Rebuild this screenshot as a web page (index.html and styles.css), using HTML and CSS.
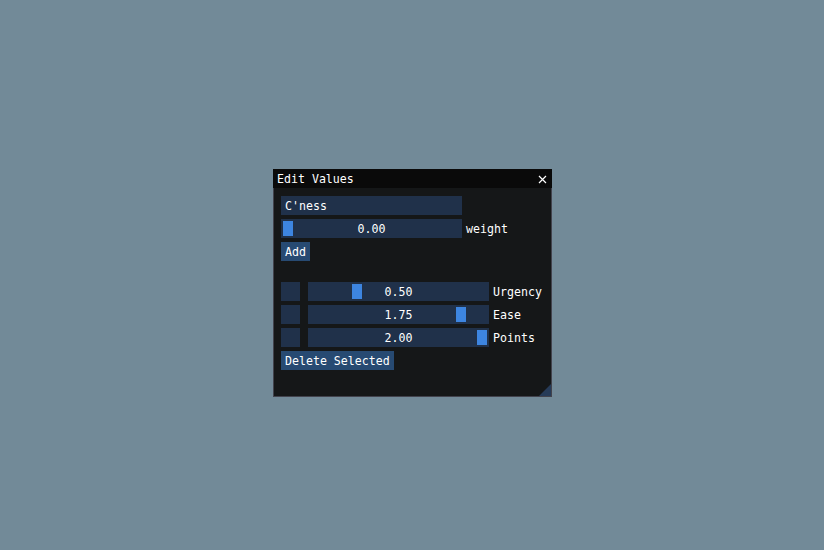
FILE: index.html
```html
<!DOCTYPE html>
<html>
<head>
<meta charset="utf-8">
<link rel="stylesheet" href="styles.css">
</head>
<body>
<div class="win">
  <div class="title">
    <span class="title-text">Edit Values</span>
    <svg class="close" width="9" height="9" viewBox="0 0 9 9"><path d="M1 1L8 8M8 1L1 8" stroke="#fff" stroke-width="1.2" fill="none"/></svg>
  </div>
  <div class="content">
    <div class="row"><div class="frame wide">C'ness</div></div>
    <div class="row">
      <div class="frame wide slider"><span class="grab" style="left:2px"></span><span class="val">0.00</span></div>
      <span class="label">weight</span>
    </div>
    <div class="row"><div class="btn">Add</div></div>
    <div class="blank"></div>
    <div class="row">
      <div class="frame sq"></div>
      <div class="frame wide slider"><span class="grab" style="left:43.75px"></span><span class="val">0.50</span></div>
      <span class="label">Urgency</span>
    </div>
    <div class="row">
      <div class="frame sq"></div>
      <div class="frame wide slider"><span class="grab" style="left:148.125px"></span><span class="val">1.75</span></div>
      <span class="label">Ease</span>
    </div>
    <div class="row">
      <div class="frame sq"></div>
      <div class="frame wide slider"><span class="grab" style="left:169px"></span><span class="val">2.00</span></div>
      <span class="label">Points</span>
    </div>
    <div class="row"><div class="btn">Delete Selected</div></div>
  </div>
  <div class="grip"></div>
</div>
</body>
</html>
```

FILE: styles.css
```css
html, body {
  margin: 0;
  padding: 0;
}
body {
  width: 824px;
  height: 550px;
  background: #728a98;
  position: relative;
  overflow: hidden;
  font-family: "DejaVu Sans Mono", "Liberation Mono", monospace;
  font-size: 11.6px;
  line-height: 13px;
  color: #ffffff;
}
.win {
  position: absolute;
  left: 273px;
  top: 169px;
  width: 277px;
  height: 226px;
  border: 1px solid #42434d;
  background: #151718;
  box-sizing: content-box;
}
.title {
  margin-top: -1px;
  margin-left: -1px;
  margin-right: -1px;
  padding: 2px 0 0 0;
  background: #0a0a0a;
  display: flex;
  align-items: center;
  justify-content: space-between;
  box-sizing: border-box;
  height: 19px;
  position: relative;
}
.title-text {
  padding-left: 4px;
  white-space: pre;
}
.close {
  margin-right: 5px;
  margin-top: -1px;
  display: block;
}
.content {
  padding: 8px 7px 0 7px;
  display: flex;
  flex-direction: column;
  gap: 4px;
}
.row {
  display: flex;
  align-items: stretch;
  height: 19px;
}
.frame {
  height: 19px;
  background: #20314a;
  box-sizing: border-box;
  padding: 4px 4px 2px 4px;
  white-space: pre;
}
.wide {
  width: 181px;
}
.sq {
  width: 19px;
  margin-right: 8px;
}
.slider {
  position: relative;
  text-align: center;
}
.val {
  position: relative;
}
.grab {
  position: absolute;
  top: 2px;
  width: 10px;
  height: 15px;
  background: #3d85e0;
}
.label {
  margin-left: 4px;
  padding-top: 4px;
  white-space: pre;
}
.btn {
  height: 19px;
  padding: 4px 4px 2px 4px;
  box-sizing: border-box;
  background: #274a72;
  white-space: pre;
}
.blank {
  height: 13px;
}
.grip {
  position: absolute;
  right: 0;
  bottom: 0;
  width: 0;
  height: 0;
  border-style: solid;
  border-width: 0 0 12px 12px;
  border-color: transparent transparent #263b58 transparent;
}
```
